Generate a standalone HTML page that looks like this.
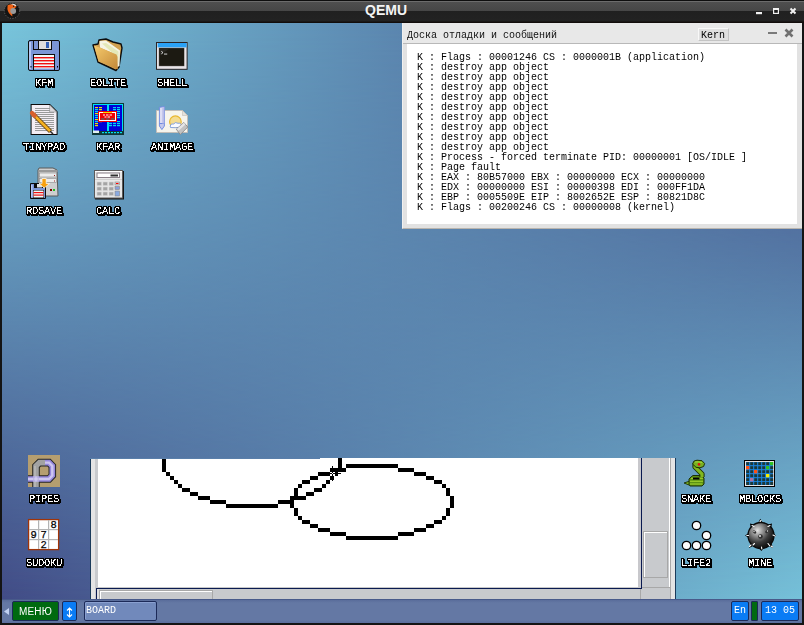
<!DOCTYPE html>
<html><head><meta charset="utf-8">
<style>
*{margin:0;padding:0;box-sizing:border-box}
html,body{width:804px;height:625px;overflow:hidden;background:#141414}
body{position:relative;font-family:"Liberation Sans",sans-serif}
.a{position:absolute}
#tb{left:0;top:0;width:804px;height:23px;background:linear-gradient(to bottom,#0e0e0e 0,#0e0e0e 1px,#6c6c6c 1px,#6c6c6c 2px,#4f4f4f 2px,#464646 11px,#202020 11px,#222 21px,#120d0b 22px,#120d0b 23px)}
#ttl{left:365px;top:3px;color:#f4f4f4;font-weight:bold;font-size:14px;line-height:14px}
#desk{left:2px;top:23px;width:800px;height:600px;background:linear-gradient(to right,#78c6dc,#3f4682)}
#desk2{left:0;top:0;width:800px;height:600px;background:linear-gradient(to right,#3f4682,#78c6dc);-webkit-mask-image:linear-gradient(to bottom,transparent,#000);mask-image:linear-gradient(to bottom,transparent,#000)}
.mono{font-family:"Liberation Mono",monospace}
.lbl{position:absolute;width:80px;text-align:center;font-family:"Liberation Mono",monospace;font-size:10.5px;line-height:10px;letter-spacing:-0.3px;color:#fff;filter:url(#lblf)}
#board{will-change:transform;left:402px;top:23px;width:400px;height:206px;background:#e2e2e2;border-left:1px solid #f0f0f0;border-bottom:1px solid #b8b4ae}
#bt{left:0;top:0;width:399px;height:21px;background:#e8e8e8;border-bottom:1px solid #b8b8b8}
#btext{left:4px;top:8px;font-size:10px;line-height:10px;color:#111}
#kern{left:295px;top:5px;width:31px;height:13px;background:#e0e0e0;border:1px solid #f8f8f8;border-right-color:#c4c4c4;border-bottom-color:#c4c4c4;font-size:10px;line-height:13px;color:#000;padding-left:2px}
#bc{left:4px;top:21px;width:390px;height:180px;background:#fff}
#log{left:10px;top:9px;font-size:10px;line-height:10px;color:#000;white-space:pre}
#paint{left:90px;top:458px;width:586px;height:141px;background:#c8cacd}

#task{left:2px;top:599px;width:800px;height:24px;background:linear-gradient(to bottom,#5a6d9b 0,#6478a4 3px,#6478a4 20px,#5b6e9d 23px);border-top:1px solid #485a8a}
.btn{position:absolute;top:1px;height:20px;border:1px solid #1c2a58;border-radius:2px;will-change:transform;color:#fff;font-family:"Liberation Mono",monospace;font-size:11px;line-height:17px}
</style></head><body>
<svg width="0" height="0" style="position:absolute"><defs><filter id="lblf" x="-20%" y="-50%" width="140%" height="200%" color-interpolation-filters="sRGB">
<feComponentTransfer in="SourceAlpha" result="a"><feFuncA type="discrete" tableValues="0 0 1 1"/></feComponentTransfer>
<feMorphology in="a" operator="dilate" radius="1" result="d"/>
<feOffset in="d" dx="1" dy="1" result="d2"/>
<feMerge result="o"><feMergeNode in="d"/><feMergeNode in="d2"/></feMerge>
<feFlood flood-color="#000" result="bk"/><feComposite in="bk" in2="o" operator="in" result="blk"/>
<feFlood flood-color="#fff" result="wt"/><feComposite in="wt" in2="a" operator="in" result="wht"/>
<feMerge><feMergeNode in="blk"/><feMergeNode in="wht"/></feMerge>
</filter></defs></svg>
<div id="tb" class="a"></div>
<svg class="a" style="left:3px;top:1px" width="19" height="19" viewBox="0 0 19 19">
<circle cx="9" cy="9.8" r="7.7" fill="#141414" stroke="#7a7a7a" stroke-width="0.7" stroke-dasharray="1.2 1.4"/>
<path d="M4.6 4.2 Q8 2.6 11 3.6 L13.6 5.8 L11.2 7.6 Q8.6 10.2 9.4 15.6 Q5 12.2 4.4 8 Z" fill="#f06418"/>
<circle cx="10.2" cy="10" r="2.9" fill="#9a9a9a"/>
<path d="M7.6 3 Q11 1.8 13.8 4.6 L12.2 5 Q10 3.4 7.6 3 Z" fill="#eeeeee"/>
<circle cx="10.6" cy="5.2" r="0.7" fill="#202020"/>
</svg>
<div id="ttl" class="a">QEMU</div>
<svg class="a" style="left:754px;top:6px" width="46" height="10" viewBox="0 0 46 10">
<rect x="2" y="6" width="6" height="2.2" fill="#f0f0f0"/>
<rect x="19.6" y="2.6" width="4.8" height="4.8" fill="#1c1c1c" stroke="#f0f0f0" stroke-width="1.2"/><rect x="19" y="2" width="6" height="2" fill="#f0f0f0"/>
<path d="M36.5 2.5 L41.5 7.5 M41.5 2.5 L36.5 7.5" stroke="#f0f0f0" stroke-width="2"/>
</svg>
<div id="desk" class="a"><div id="desk2" class="a"></div></div>

<svg class="a" style="left:0;top:0" width="804" height="625" viewBox="0 0 804 625">
<!-- KFM -->
<g transform="translate(28,40)">
<rect x="0.5" y="0.5" width="31" height="30" rx="1.5" fill="#7b96d6" stroke="#0c0c0c"/>
<rect x="1" y="2" width="2" height="27" fill="#b4c6f2"/>
<rect x="5" y="0" width="19" height="10" fill="#0c0c0c"/>
<rect x="6" y="1" width="4" height="8" fill="#7b96d6"/>
<rect x="11" y="1" width="12" height="8" fill="#dedede"/>
<rect x="18" y="2" width="3" height="6" fill="#3562b8"/>
<rect x="5" y="14" width="22" height="17" fill="#0c0c0c"/>
<rect x="6" y="15" width="20" height="14" fill="#f2fafa"/>
<rect x="6" y="17" width="20" height="1.4" fill="#f01010"/>
<rect x="6" y="20" width="20" height="1.4" fill="#f01010"/>
<rect x="6" y="23" width="20" height="1.4" fill="#f01010"/>
<rect x="6" y="26" width="20" height="1.4" fill="#f01010"/>
<rect x="6" y="28.5" width="20" height="1.5" fill="#7b96d6"/>
<rect x="2.5" y="26" width="1" height="1.5" fill="#000"/><rect x="29" y="26" width="1" height="1.5" fill="#000"/>
</g>
<!-- EOLITE -->
<g>
<defs><linearGradient id="fg" x1="95" y1="46" x2="117" y2="69" gradientUnits="userSpaceOnUse"><stop offset="0" stop-color="#f4c86a"/><stop offset="1" stop-color="#c48a3a"/></linearGradient></defs>
<polygon points="93,45 98,44 99,40 106,39 113,42 121,44 122,48 119,67 116,70.5 98,62" fill="#d0a050" stroke="#0c0c0c" stroke-width="1.4" stroke-linejoin="round"/>
<polygon points="99.5,41 106,40.5 120,50.5 119.5,66 117,67 117,55 100,47.5" fill="#f6f4e4"/>
<polygon points="102,43.5 106,43 118.5,51.5 118.5,64 117,57" fill="#e4e8b8"/>
<polygon points="94,45.5 99.5,47.5 116.5,54.5 117.5,57 117.8,69.5 98.5,61.5" fill="url(#fg)"/>
</g>
<!-- SHELL -->
<g transform="translate(156,42)">
<rect x="0" y="0" width="31.6" height="27.8" fill="#2a2424"/>
<rect x="1" y="1" width="29.6" height="25.8" fill="#e8e4e8"/>
<rect x="1.6" y="1" width="29" height="4.4" fill="#2aa2f6"/>
<rect x="2.8" y="5.8" width="25.6" height="18.4" fill="#6a6660"/>
<rect x="3.2" y="6.2" width="24.8" height="17.6" fill="#1c1a12"/>
<polygon points="3.2,6.2 14,6.2 3.2,14" fill="#2a2822"/>
<path d="M5.3 9.3 L7 10.6 L5.3 11.9" stroke="#e8e8e8" stroke-width="0.9" fill="none"/>
<rect x="8" y="11.6" width="3.2" height="0.9" fill="#e8e8e8"/>
</g>
<!-- TINYPAD -->
<g transform="translate(28,104)">
<polygon points="2.6,0 22,0 29.6,7.4 29.6,31 2.6,31" fill="#0c0c0c"/>
<polygon points="3.6,1 21.6,1 28.6,8 28.6,30 3.6,30" fill="#f4eef4"/>
<polygon points="21.6,1 21.6,8 28.6,8" fill="#dcd8dc" stroke="#909090" stroke-width="0.6"/>
<g fill="#9a9a9a"><rect x="7" y="4" width="15" height="1"/><rect x="7" y="6" width="15" height="1"/><rect x="7" y="8" width="19" height="1"/><rect x="7" y="10" width="19" height="1"/><rect x="7" y="12" width="19" height="1"/><rect x="7" y="14" width="19" height="1"/><rect x="7" y="16" width="19" height="1"/><rect x="7" y="18" width="19" height="1"/><rect x="7" y="20" width="19" height="1"/><rect x="7" y="22" width="19" height="1"/><rect x="7" y="24" width="19" height="1"/><rect x="7" y="26" width="19" height="1"/></g>
<path d="M5.5 10.5 L22.5 27.5" stroke="#5a3a10" stroke-width="4.2"/>
<path d="M5.5 10.5 L22.5 27.5" stroke="#f4b020" stroke-width="2.6"/>
<path d="M4 9 L6.6 11.6" stroke="#d8602c" stroke-width="4.4" stroke-linecap="round"/>
<path d="M22 27 L25 30" stroke="#303030" stroke-width="1.6"/>
</g>
<!-- KFAR -->
<g transform="translate(92,103)">
<rect x="0" y="0" width="32" height="32" fill="#103838"/>
<rect x="1" y="1" width="30" height="29" fill="#00e0f0"/>
<rect x="2" y="2" width="13" height="26" fill="#0000d8"/>
<rect x="17" y="2" width="13" height="26" fill="#0000d8"/>
<g fill="#f0e000"><rect x="3" y="4" width="3" height="1.2"/><rect x="7" y="4" width="3" height="1.2"/><rect x="7" y="6" width="3" height="1.2"/><rect x="3" y="10" width="3" height="1.2"/><rect x="3" y="16" width="3" height="1.2"/><rect x="7" y="18" width="3" height="1.2"/><rect x="3" y="20" width="3" height="1.2"/><rect x="3" y="22" width="3" height="1.2"/></g>
<g fill="#00d8f0"><rect x="3" y="6" width="3" height="1.2"/><rect x="3" y="8" width="3" height="1.2"/><rect x="3" y="12" width="3" height="1.2"/><rect x="3" y="14" width="3" height="1.2"/><rect x="3" y="18" width="3" height="1.2"/><rect x="21" y="4" width="3" height="1.2"/><rect x="25" y="4" width="3" height="1.2"/><rect x="21" y="6" width="3" height="1.2"/><rect x="25" y="6" width="3" height="1.2"/><rect x="25" y="8" width="3" height="1.2"/><rect x="25" y="10" width="3" height="1.2"/><rect x="25" y="12" width="3" height="1.2"/><rect x="25" y="14" width="3" height="1.2"/><rect x="17" y="18" width="3" height="1.2"/><rect x="21" y="18" width="3" height="1.2"/><rect x="25" y="18" width="3" height="1.2"/><rect x="17" y="20" width="3" height="1.2"/><rect x="21" y="20" width="3" height="1.2"/><rect x="25" y="20" width="3" height="1.2"/><rect x="17" y="22" width="3" height="1.2"/><rect x="21" y="22" width="3" height="1.2"/><rect x="25" y="22" width="3" height="1.2"/></g>
<rect x="6" y="8" width="19" height="11" fill="#f00000"/>
<rect x="7.5" y="9.5" width="16" height="8" fill="none" stroke="#fff" stroke-width="1"/>
<rect x="11" y="9" width="9" height="1" fill="#f0e000"/>
<g fill="#fff"><rect x="11" y="11.5" width="2" height="1"/><rect x="14" y="11.5" width="2.5" height="1"/><rect x="17.5" y="11.5" width="2.5" height="1"/><rect x="12.5" y="13.5" width="2" height="1"/><rect x="15.5" y="13.5" width="2.5" height="1"/></g>
<g fill="#208888"><rect x="9" y="15.5" width="3.5" height="1"/><rect x="14" y="15.5" width="3.5" height="1"/><rect x="19" y="15.5" width="3.5" height="1"/></g>
<rect x="1" y="28" width="30" height="3" fill="#103838"/>
<g fill="#00e0f0"><rect x="10" y="29" width="2" height="1.2"/><rect x="13" y="29" width="2" height="1.2"/><rect x="16" y="29" width="2" height="1.2"/><rect x="19" y="29" width="2" height="1.2"/><rect x="22" y="29" width="2" height="1.2"/><rect x="25" y="29" width="2" height="1.2"/><rect x="28" y="29" width="2" height="1.2"/></g>
<rect x="1" y="27.5" width="6" height="2.5" fill="#e0f0f0"/>
</g>
<!-- ANIMAGE -->
<g transform="translate(156,106)">
<polygon points="0.5,4.5 26.5,4.5 31.5,9.5 31.5,26.5 0.5,26.5" fill="#f6f4ec" stroke="#c4bcb4" stroke-width="0.9"/>
<polygon points="26.5,4.5 26.5,9.5 31.5,9.5" fill="#e4e2dc" stroke="#c4bcb4" stroke-width="0.6"/>
<circle cx="19.4" cy="15.7" r="5.8" fill="#f4dc90" stroke="#e8b830" stroke-width="1.2"/>
<path d="M14.2 20 Q15 17 17.5 18 Q19.5 15.5 22 17.3 Q24 16.3 25 18.5 L24.5 21.3 Q19 22 14.5 21.5Z" fill="#f8faff" stroke="#7898d8" stroke-width="0.9"/>
<polygon points="3.4,1.3 8.4,0.6 8.4,17.5 3.4,17.5" fill="#dcdcf4" stroke="#6a86e0" stroke-width="0.9"/>
<polygon points="3.4,17.5 8.4,17.5 8.4,20 5.9,23.6 3.4,20" fill="#c4c8ec" stroke="#6a86e0" stroke-width="0.9"/>
<rect x="6.3" y="1" width="2" height="16.5" fill="#b8bce8"/>
<polygon points="20.3,23.2 27.8,16.5 31.8,21 24.3,28.6" fill="#c2c2c2" stroke="#8a8a8a" stroke-width="0.9" stroke-linejoin="round"/>
<polygon points="20.8,23 27.8,16.8 29.5,18.6 22.5,24.8" fill="#e6e6e6"/>
</g>
<!-- RDSAVE -->
<g transform="translate(28,168)">
<polygon points="10,2 11,0 25,0 29,2 30,28 10,28" fill="#cfcfcf" stroke="#5a5a5a" stroke-width="1"/>
<rect x="10.5" y="2" width="19" height="2" fill="#9a9a9a"/>
<rect x="11.5" y="5" width="17" height="4" fill="#ececec" stroke="#8a8a8a" stroke-width="0.6"/>
<rect x="11.5" y="10.5" width="17" height="4" fill="#ececec" stroke="#8a8a8a" stroke-width="0.6"/>
<rect x="26" y="7" width="1" height="1" fill="#a02020"/><rect x="26" y="12.5" width="1" height="1" fill="#a02020"/>
<rect x="22" y="21" width="2" height="2" fill="#800000"/><rect x="25" y="21" width="2" height="2" fill="#20c020"/>
<rect x="2" y="15" width="16" height="16" rx="1" fill="#0c0c0c"/>
<rect x="3" y="16" width="14" height="14" fill="#7b96d6"/>
<rect x="3" y="17" width="1.5" height="12" fill="#b4c6f2"/>
<rect x="6" y="15" width="9" height="5" fill="#0c0c0c"/>
<rect x="9" y="16" width="5" height="3.5" fill="#e0e0e0"/>
<rect x="5" y="22" width="11" height="8" fill="#0c0c0c"/>
<rect x="5.5" y="22.5" width="10" height="7" fill="#f2fafa"/>
<rect x="5.5" y="24" width="10" height="1.2" fill="#f01010"/><rect x="5.5" y="26.5" width="10" height="1.2" fill="#f01010"/>
<polygon points="14,10.5 18.2,10.5 18.2,15.5 21.5,15.5 16.2,20 11,15.5 14,15.5" fill="#f8a010" stroke="#ffffff" stroke-width="0.7"/>
</g>
<!-- CALC -->
<g transform="translate(94,170)">
<rect x="1" y="1" width="29" height="28.5" fill="#141414"/>
<rect x="0.5" y="0.5" width="28" height="27.5" fill="#e8e8e8" stroke="#5a5a5a" stroke-width="1"/>
<rect x="1" y="1" width="27" height="1" fill="#fff"/>
<rect x="3" y="3" width="22.5" height="4.5" fill="#fff" stroke="#8a8088" stroke-width="1"/>
<rect x="16.5" y="4.5" width="7.5" height="2" fill="#303030"/>
<rect x="1" y="9" width="27" height="1" fill="#d0d0d0"/>
<g fill="#a4a4a4" stroke="#d4d4d4" stroke-width="0.6"><rect x="3" y="12" width="4.5" height="3.5"/><rect x="9" y="12" width="4.5" height="3.5"/><rect x="15" y="12" width="4.5" height="3.5"/><rect x="3" y="17" width="4.5" height="3.5"/><rect x="9" y="17" width="4.5" height="3.5"/><rect x="15" y="17" width="4.5" height="3.5"/><rect x="3" y="22" width="4.5" height="3.5"/><rect x="9" y="22" width="4.5" height="3.5"/><rect x="15" y="22" width="4.5" height="3.5"/></g>
<rect x="21" y="12" width="4.5" height="3" fill="#d8d0d0" stroke="#888" stroke-width="0.6"/><rect x="22" y="13" width="2.5" height="1" fill="#f00"/>
<rect x="21" y="16.5" width="4.5" height="3" fill="#8aa0d8" stroke="#888" stroke-width="0.6"/>
<rect x="21" y="21" width="4.5" height="5" fill="#8aaae0" stroke="#888" stroke-width="0.6"/>
</g>
<!-- PIPES -->
<g transform="translate(28,455)">
<rect x="0" y="0" width="32" height="32" fill="#b59e70"/>
<path d="M8 32 V11 L11.5 7.6 H21 L24.3 11 V20.5 L21 24 H0" fill="none" stroke="#262626" stroke-width="7.6" stroke-linejoin="miter"/>
<path d="M17 7.6 H21 L24.3 11 V20.5 L21 24 H0" fill="none" stroke="#9688dc" stroke-width="5.6"/>
<path d="M17 7.6 H21 L24.3 11 V20.5 L21 24 H0" fill="none" stroke="#cdc6f0" stroke-width="2.4"/>
<path d="M8 32 V11 L11.5 7.6 H17" fill="none" stroke="#a2a2a2" stroke-width="5.6"/>
<path d="M7 32 V11" fill="none" stroke="#b8b8b8" stroke-width="1.5"/>
<rect x="5.2" y="21.2" width="5.6" height="5.6" fill="#b8b0e8"/>
<path d="M8 21.5 V26.5 M5.5 24 H10.5" stroke="#dcd8f4" stroke-width="1"/>
</g>
<!-- SUDOKU -->
<g transform="translate(28,519)">
<rect x="0.6" y="0.6" width="30" height="30" fill="#fff" stroke="#a03408" stroke-width="1.3"/>
<g fill="#b4b4b4"><rect x="10" y="1" width="1.2" height="29"/><rect x="20" y="1" width="1.2" height="29"/><rect x="1" y="10" width="29" height="1.2"/><rect x="1" y="20" width="29" height="1.2"/></g>
<g font-family="Liberation Mono" font-size="10.5" text-anchor="middle" fill="#000" stroke="#000" stroke-width="0.25">
<text x="25.6" y="9">8</text><text x="5.6" y="19">9</text><text x="15.6" y="19">7</text><text x="15.6" y="29">2</text></g>
</g>
<!-- SNAKE -->
<g>
<polygon points="684,483 689,481.3 691,481.3 691,485 689,485" fill="#80b820" stroke="#1c3006" stroke-width="0.9"/>
<path d="M691 477 L693 475.5 L701 475.5 L704 478 L704 484 L702 486 L690 486 L689 484.5 L689 479 Z" fill="#5a9012" stroke="#1c3006" stroke-width="1"/>
<path d="M690 481.3 H703 M690 484 H702.5 M691 478.2 H703" stroke="#a8d830" stroke-width="1.1"/>
<rect x="693" y="477.5" width="6.5" height="2" fill="#000"/>
<path d="M702 477 L702 474 L695 467 L695 464" stroke="#1c3006" stroke-width="5.2" fill="none" stroke-linejoin="round"/>
<path d="M702 477 L702 474 L695 467 L695 464" stroke="#80b820" stroke-width="3.2" fill="none"/>
<path d="M692.6 464 Q693 460.2 697 460.2 L702 460.7 L704.6 463.5 L703.6 466.5 L700 467.8 L696 467.3 Z" fill="#78b020" stroke="#1c3006" stroke-width="1"/>
<path d="M695 462 Q698 461.5 702 462.5" stroke="#a8d838" stroke-width="1" fill="none"/>
<circle cx="699" cy="464.4" r="1.3" fill="#e01010"/>
</g>
<!-- MBLOCKS -->
<g transform="translate(744,460)">
<rect x="0" y="0" width="31" height="27" fill="#000"/>
<rect x="1" y="1" width="29" height="25" fill="#e8e4e4"/>
<rect x="2" y="2" width="27" height="23" fill="#1a88e8"/>
<g id="mbc" fill="#1c3838">
<rect x="2.2" y="2.2" width="3" height="3"/><rect x="6.2" y="2.2" width="3" height="3"/><rect x="10.2" y="2.2" width="3" height="3"/><rect x="14.2" y="2.2" width="3" height="3"/><rect x="18.2" y="2.2" width="3" height="3"/><rect x="22.2" y="2.2" width="3" height="3"/>
<rect x="6.2" y="6.2" width="3" height="3"/><rect x="10.2" y="6.2" width="3" height="3"/><rect x="14.2" y="6.2" width="3" height="3"/><rect x="18.2" y="6.2" width="3" height="3"/><rect x="26.2" y="6.2" width="3" height="3"/>
<rect x="2.2" y="10.2" width="3" height="3"/><rect x="6.2" y="10.2" width="3" height="3"/><rect x="14.2" y="10.2" width="3" height="3"/><rect x="18.2" y="10.2" width="3" height="3"/><rect x="22.2" y="10.2" width="3" height="3"/><rect x="26.2" y="10.2" width="3" height="3"/>
<rect x="2.2" y="14.2" width="3" height="3"/><rect x="6.2" y="14.2" width="3" height="3"/><rect x="10.2" y="14.2" width="3" height="3"/><rect x="14.2" y="14.2" width="3" height="3"/><rect x="18.2" y="14.2" width="3" height="3"/><rect x="26.2" y="14.2" width="3" height="3"/>
<rect x="2.2" y="18.2" width="3" height="3"/><rect x="10.2" y="18.2" width="3" height="3"/><rect x="14.2" y="18.2" width="3" height="3"/><rect x="18.2" y="18.2" width="3" height="3"/><rect x="22.2" y="18.2" width="3" height="3"/><rect x="26.2" y="18.2" width="3" height="3"/>
<rect x="2.2" y="22" width="3" height="3"/><rect x="6.2" y="22" width="3" height="3"/><rect x="10.2" y="22" width="3" height="3"/><rect x="14.2" y="22" width="3" height="3"/><rect x="18.2" y="22" width="3" height="3"/><rect x="22.2" y="22" width="3" height="3"/><rect x="26.2" y="22" width="3" height="3"/>
</g>
<rect x="26" y="2" width="3.3" height="3.3" fill="#30c020"/>
<rect x="2" y="6" width="3.3" height="3.3" fill="#ff5010"/>
<rect x="22" y="6" width="3.3" height="3.3" fill="#30c020"/>
<rect x="10" y="10" width="3.3" height="3.3" fill="#ff5010"/>
<rect x="22" y="14" width="3.3" height="3.3" fill="#f8f000"/>
<rect x="6" y="18" width="3.3" height="3.3" fill="#b070a0"/>
</g>
<!-- LIFE2 -->
<g fill="#fcfcfc" stroke="#000" stroke-width="1.3">
<circle cx="696.5" cy="525.5" r="4.2"/>
<circle cx="706.5" cy="535.5" r="4.2"/>
<circle cx="686.5" cy="545.5" r="4.2"/>
<circle cx="696.5" cy="545.5" r="4.2"/>
<circle cx="706.5" cy="545.5" r="4.2"/>
</g>
<!-- MINE -->
<g>
<defs><radialGradient id="mg" cx="757.5" cy="530.5" r="17" gradientUnits="userSpaceOnUse"><stop offset="0" stop-color="#e4e4e4"/><stop offset="0.3" stop-color="#999"/><stop offset="0.7" stop-color="#3a3a3a"/><stop offset="1" stop-color="#151515"/></radialGradient></defs>
<g fill="#000">
<polygon points="758,523 760.3,518.8 763,523"/>
<polygon points="749,533 745,535.4 749,538"/>
<polygon points="773,533 776,535.4 773,538"/>
<polygon points="758.5,548 761.4,551 764,548"/>
<polygon points="750,523.5 756,525 751,529"/>
<polygon points="772,523.5 766,525 771,529"/>
<polygon points="749,548 755,545 751,542"/>
<polygon points="773,548 767,545 771,542"/>
</g>
<circle cx="761" cy="535.5" r="13" fill="url(#mg)" stroke="#0a0a0a" stroke-width="1.3"/>
<g stroke="#fff" stroke-width="1.1" stroke-linecap="round">
<path d="M760 521.5 L761 520.5"/><path d="M752 525.5 L754 526.5"/><path d="M768 526.5 L770 525.5"/><path d="M746.8 535.5 L748.5 535.5"/><path d="M773 535 L775 536"/><path d="M749.5 546.5 L751 545"/><path d="M753 545 L754.5 543.5"/><path d="M768 543.5 L769.5 545.5"/><path d="M771 546 L772.5 547"/><path d="M761.5 547 L761.8 549"/>
</g>
<g fill="#303030"><ellipse cx="754.5" cy="532" rx="2" ry="1.4" transform="rotate(40 754.5 532)"/><ellipse cx="767" cy="531.5" rx="2" ry="1.4" transform="rotate(-40 767 531.5)"/><circle cx="760.5" cy="536.5" r="2.3"/></g>
<g fill="#e8e8e8"><circle cx="754" cy="531.5" r="0.7"/><circle cx="767.5" cy="531" r="0.7"/><circle cx="760" cy="536" r="1"/></g>
</g>
</svg>
<div class="lbl" style="left:4px;top:78px">KFM</div><div class="lbl" style="left:68px;top:78px">EOLITE</div><div class="lbl" style="left:132px;top:78px">SHELL</div><div class="lbl" style="left:4px;top:142px">TINYPAD</div><div class="lbl" style="left:68px;top:142px">KFAR</div><div class="lbl" style="left:132px;top:142px">ANIMAGE</div><div class="lbl" style="left:4px;top:206px">RDSAVE</div><div class="lbl" style="left:68px;top:206px">CALC</div><div class="lbl" style="left:4px;top:494px">PIPES</div><div class="lbl" style="left:4px;top:558px">SUDOKU</div><div class="lbl" style="left:656px;top:494px">SNAKE</div><div class="lbl" style="left:720px;top:494px">MBLOCKS</div><div class="lbl" style="left:656px;top:558px">LIFE2</div><div class="lbl" style="left:720px;top:558px">MINE</div>
<div id="board" class="a">
 <div id="bt" class="a"><div id="btext" class="a mono">Доска отладки и сообщений</div>
  <div id="kern" class="a mono">Kern</div>
  <div class="a" style="left:365px;top:9px;width:9px;height:2px;background:#7a7a7a"></div>
  <svg class="a" style="left:381px;top:5px" width="10" height="10" viewBox="0 0 10 10"><path d="M1.5 1.5 L8.5 8.5 M8.5 1.5 L1.5 8.5" stroke="#707070" stroke-width="2.6"/></svg>
 </div>
 <div id="bc" class="a"><div id="log" class="a mono">K : Flags : 00001246 CS : 0000001B (application)
K : destroy app object
K : destroy app object
K : destroy app object
K : destroy app object
K : destroy app object
K : destroy app object
K : destroy app object
K : destroy app object
K : destroy app object
K : Process - forced terminate PID: 00000001 [OS/IDLE ]
K : Page fault
K : EAX : 80B57000 EBX : 00000000 ECX : 00000000
K : EDX : 00000000 ESI : 00000398 EDI : 000FF1DA
K : EBP : 0005509E EIP : 8002652E ESP : 80821D8C
K : Flags : 00200246 CS : 00000008 (kernel)</div></div>
</div>

<div id="paint" class="a">
 <div class="a" style="left:0;top:0;width:1px;height:141px;background:#1a3a5a"></div>
 <div class="a" style="left:1px;top:0;width:4px;height:141px;background:#e4e4e4"></div>
 <div class="a" style="left:5px;top:0;width:3px;height:141px;background:#c8cacd"></div>
 <div class="a" style="left:8px;top:0;width:540px;height:129px;background:#fff"></div>
 <div class="a" style="left:0;top:0;width:230px;height:1px;background:#5a7faa"></div>
 <div class="a" style="left:5px;top:129px;width:546px;height:1px;background:#c8c8c8"></div>
 <div class="a" style="left:548px;top:0;width:3px;height:130px;background:#c8c8cc"></div>
 <div class="a" style="left:551px;top:0;width:1px;height:131px;background:#0a1a50"></div>
 <div class="a" style="left:6px;top:130px;width:546px;height:1px;background:#0a1a50"></div>
 <div class="a" style="left:6px;top:130px;width:1px;height:11px;background:#0a1a50"></div>
 <div class="a" style="left:7px;top:131px;width:2px;height:10px;background:#e0e0e0"></div>
 <div class="a" style="left:9px;top:132px;width:114px;height:9px;background:#a8a8a8"></div>
 <div class="a" style="left:10px;top:133px;width:112px;height:8px;background:#c8cacd;border-left:1px solid #fff;border-top:1px solid #fff"></div>
 <div class="a" style="left:550px;top:131px;width:1px;height:10px;background:#a8a8a8"></div>
 <div class="a" style="left:553px;top:73px;width:25px;height:47px;background:#c8cacd;border:1px solid #a8a8a8;box-shadow:inset 1px 1px 0 #fff"></div>
 <div class="a" style="left:552px;top:129px;width:28px;height:1px;background:#a8a8a8"></div>
 <div class="a" style="left:579px;top:0;width:1px;height:129px;background:#fff"></div>
 <div class="a" style="left:580px;top:0;width:1px;height:141px;background:#a8a8a8"></div>
 <div class="a" style="left:581px;top:0;width:4px;height:141px;background:#e4e4e4"></div>
 <div class="a" style="left:585px;top:0;width:1px;height:141px;background:#1a3a5a"></div>
 <svg class="a" style="left:0;top:0" width="586" height="141" viewBox="0 0 586 141"><g fill="#000"><rect x="248" y="0" width="4" height="1"/><rect x="72" y="1" width="4" height="13"/><rect x="76" y="14" width="4" height="4"/><rect x="80" y="18" width="4" height="4"/><rect x="84" y="22" width="4" height="4"/><rect x="88" y="26" width="4" height="4"/><rect x="92" y="30" width="8" height="4"/><rect x="100" y="34" width="8" height="4"/><rect x="108" y="38" width="12" height="4"/><rect x="120" y="42" width="16" height="4"/><rect x="136" y="46" width="52" height="4"/><rect x="188" y="42" width="16" height="4"/><rect x="200" y="38" width="4" height="6"/><rect x="200" y="44" width="4" height="6"/><rect x="204" y="30" width="4" height="8"/><rect x="204" y="38" width="12" height="4"/><rect x="204" y="50" width="4" height="8"/><rect x="208" y="26" width="4" height="4"/><rect x="208" y="58" width="4" height="4"/><rect x="212" y="22" width="8" height="4"/><rect x="212" y="62" width="8" height="4"/><rect x="216" y="34" width="8" height="4"/><rect x="220" y="18" width="8" height="4"/><rect x="220" y="66" width="8" height="4"/><rect x="224" y="30" width="8" height="4"/><rect x="228" y="14" width="12" height="4"/><rect x="228" y="70" width="12" height="4"/><rect x="232" y="26" width="4" height="4"/><rect x="236" y="22" width="4" height="4"/><rect x="240" y="10" width="16" height="4"/><rect x="240" y="18" width="4" height="4"/><rect x="240" y="74" width="16" height="4"/><rect x="244" y="14" width="4" height="4"/><rect x="248" y="1" width="4" height="13"/><rect x="256" y="6" width="52" height="4"/><rect x="256" y="78" width="52" height="4"/><rect x="308" y="10" width="16" height="4"/><rect x="308" y="74" width="16" height="4"/><rect x="324" y="14" width="12" height="4"/><rect x="324" y="70" width="12" height="4"/><rect x="336" y="18" width="8" height="4"/><rect x="336" y="66" width="8" height="4"/><rect x="344" y="22" width="8" height="4"/><rect x="344" y="62" width="8" height="4"/><rect x="352" y="26" width="4" height="4"/><rect x="352" y="58" width="4" height="4"/><rect x="356" y="30" width="4" height="8"/><rect x="356" y="50" width="4" height="8"/><rect x="360" y="38" width="4" height="6"/><rect x="360" y="44" width="4" height="6"/></g></svg>
</div>
<div class="a" style="left:330px;top:472px;width:5px;height:4px;background:#fff"></div><div class="a" style="left:332px;top:466px;width:1px;height:15px;background:#000"></div><div class="a" style="left:330px;top:473px;width:11px;height:1px;background:#000"></div><div class="a" style="left:332px;top:473px;width:1px;height:1px;background:#fff"></div>
<div id="task" class="a">
 <svg class="a" style="left:1px;top:8px" width="7" height="8" viewBox="0 0 7 8"><polygon points="1,3.5 6,0 6,7" fill="#c0d0f0"/></svg>
 <div class="btn" style="left:10px;width:47px;background:#006a10;text-align:center;font-family:'Liberation Sans',sans-serif;font-size:10px;line-height:19px;letter-spacing:0.2px">МЕНЮ</div>
 <div class="btn" style="left:60px;width:15px;background:#0a7cf5"><svg class="a" style="left:0;top:0" width="13" height="18" viewBox="0 0 13 18"><path d="M6.5 5.5 V15 M4 8.5 L6.5 6 L9 8.5 M4 12.5 L6.5 15 L9 12.5" stroke="#fff" stroke-width="1.1" fill="none"/></svg></div>
 <div class="btn" style="left:82px;width:73px;background:#7189bb;box-shadow:inset 1px 1px 0 #8aa0d0;padding-left:1px;font-size:10px">BOARD</div>
 <div class="btn" style="left:729px;width:18px;background:#0a7cf5;text-align:center;font-size:10px">En</div>
 <div class="a" style="left:749px;top:1px;width:7px;height:20px;background:#006a10;border:1px solid #1c2a58;border-radius:1px"></div>
 <div class="btn" style="left:759px;width:38px;background:#0a7cf5;text-align:center;font-size:10px">13 05</div>
</div>
</body></html>
